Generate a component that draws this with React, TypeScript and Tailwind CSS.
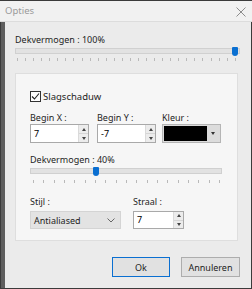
import React from 'react';

const font = { fontFamily: '"Noto Sans", "Open Sans", sans-serif' };

function Ticks({ count, className }: { count: number; className: string }) {
  return (
    <div className={`flex justify-between ${className}`}>
      {Array.from({ length: count }).map((_, i) => (
        <span key={i} className="block w-px h-[3px] bg-[#b9b9b9]" />
      ))}
    </div>
  );
}

function Spin({ value, w, h = 'h-[19px]' }: { value: string; w: string; h?: string }) {
  return (
    <div className={`${w} ${h} border border-[#a9a9a9] bg-white flex`}>
      <div className="flex-1 pl-[3px] flex items-center text-black">{value}</div>
      <div className="w-[10px] flex flex-col bg-[#ececec] border-l border-[#dadada]">
        <div className="flex-1 flex items-center justify-center border-b border-[#d5d5d5]">
          <span className="w-0 h-0 border-l-[2px] border-r-[2px] border-b-[3px] border-l-transparent border-r-transparent border-b-[#444]" />
        </div>
        <div className="flex-1 flex items-center justify-center">
          <span className="w-0 h-0 border-l-[2px] border-r-[2px] border-t-[3px] border-l-transparent border-r-transparent border-t-[#444]" />
        </div>
      </div>
    </div>
  );
}

function Thumb() {
  return <div className="w-[6px] h-[9px] bg-[#0a6fd1] rounded-b-[3px] rounded-t-[1px]" />;
}

export default function App() {
  return (
    <div className="w-[252px] h-[289px] bg-[#3b3b3b] flex flex-col text-[9px] text-[#1e1e1e]" style={font}>
      {/* Title bar */}
      <div className="h-[21px] mt-px bg-[#f1f1f1] flex items-center justify-between pl-[5px] pr-[6px] border-b border-[#dcdcdc]">
        <span className="text-[9.5px] text-[#9a9a9a] leading-none">Opties</span>
        <svg width="10" height="10" viewBox="0 0 10 10" className="mt-[1px]">
          <path d="M0.5 0.5 L9.5 9.5 M9.5 0.5 L0.5 9.5" stroke="#8c8c8c" strokeWidth="1" />
        </svg>
      </div>

      {/* Client */}
      <div className="flex-1 flex ml-[1px] mr-[1px] mb-px">
        <div className="w-[4px] bg-[#5e5e5e]" />
        <div className="flex-1 bg-[#ebebeb] pl-[10px] pt-[12px]">
          <div className="leading-[12px] h-[12px]">Dekvermogen : 100%</div>
          <div className="relative h-[16px] w-[225px]">
            <div className="absolute left-0 right-0 top-[2px] h-[6px] bg-[#e2e2e2] border border-[#d0d0d0]" />
            <div className="absolute left-[217px] top-[1px]"><Thumb /></div>
            <Ticks count={28} className="absolute left-[2px] right-[4px] top-[12px]" />
          </div>

          {/* Group panel */}
          <div className="mt-[11px] w-[223px] h-[168px] bg-[#f6f6f6] border border-[#dedede] pl-[14px] pt-[17px]">
            <div className="flex items-center gap-[2px] h-[11px]">
              <div className="w-[11px] h-[11px] border border-[#333] bg-white flex items-center justify-center">
                <svg width="9" height="9" viewBox="0 0 9 9">
                  <path d="M1 4.5 L3.5 7 L8 1.5" fill="none" stroke="#222" strokeWidth="1.1" />
                </svg>
              </div>
              <span className="leading-[12px] text-[9.5px]">Slagschaduw</span>
            </div>

            <div className="flex mt-[10px]">
              <div className="flex flex-col w-[67px]">
                <span className="leading-[12px] h-[12px]">Begin X :</span>
                <Spin value="7" w="w-[59px]" />
              </div>
              <div className="flex flex-col w-[65px]">
                <span className="leading-[12px] h-[12px]">Begin Y :</span>
                <Spin value="-7" w="w-[59px]" />
              </div>
              <div className="flex flex-col">
                <span className="leading-[12px] h-[12px]">Kleur :</span>
                <div className="w-[59px] h-[19px] border border-[#b5b5b5] bg-[#dcdcdc] flex p-px">
                  <div className="flex-1 bg-black" />
                  <div className="w-[12px] flex items-center justify-center">
                    <span className="w-0 h-0 border-l-[2px] border-r-[2px] border-t-[3px] border-l-transparent border-r-transparent border-t-[#333]" />
                  </div>
                </div>
              </div>
            </div>

            <div className="mt-[11px] leading-[12px] h-[12px]">Dekvermogen : 40%</div>
            <div className="relative h-[18px] w-[192px]">
              <div className="absolute left-0 right-0 top-[2px] h-[6px] bg-[#e2e2e2] border border-[#d0d0d0]" />
              <div className="absolute left-[63px] top-[1px]"><Thumb /></div>
              <Ticks count={19} className="absolute left-[3px] right-[2px] top-[14px]" />
            </div>

            <div className="flex mt-[12px]">
              <div className="flex flex-col w-[103px]">
                <span className="leading-[12px] h-[12px]">Stijl :</span>
                <div className="mt-[3px] w-[91px] h-[18px] bg-[#e3e3e3] border border-[#d4d4d4] flex items-center justify-between pl-[3px] pr-[5px]">
                  <span className="leading-none">Antialiased</span>
                  <svg width="8" height="5" viewBox="0 0 8 5">
                    <path d="M0.5 0.5 L4 4 L7.5 0.5" fill="none" stroke="#666" strokeWidth="1" />
                  </svg>
                </div>
              </div>
              <div className="flex flex-col">
                <span className="leading-[12px] h-[12px]">Straal :</span>
                <div className="mt-[3px]">
                  <Spin value="7" w="w-[51px]" h="h-[18px]" />
                </div>
              </div>
            </div>
          </div>

          {/* Buttons */}
          <div className="flex gap-[11px] mt-[16px] ml-[97px]">
            <div className="w-[58px] h-[20px] bg-[#e1e1e1] border border-[#0a6fd1] flex items-center justify-center leading-none">Ok</div>
            <div className="w-[59px] h-[20px] bg-[#e1e1e1] border border-[#adadad] flex items-center justify-center leading-none">Annuleren</div>
          </div>
        </div>
      </div>
    </div>
  );
}
